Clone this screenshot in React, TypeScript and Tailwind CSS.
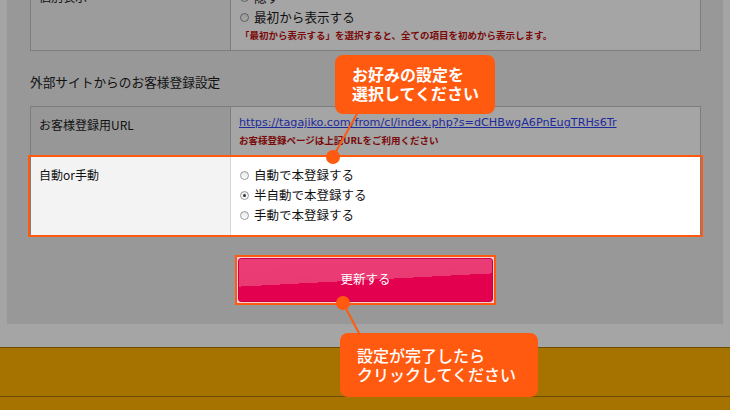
import React from "react";

const font = { fontFamily: '"Noto Sans CJK JP", "Noto Sans", sans-serif' };

function Radio({ checked, dim }: { checked?: boolean; dim?: boolean }) {
  return (
    <span
      className={
        "inline-flex items-center justify-center w-[9px] h-[9px] rounded-full border shrink-0 " +
        (dim
          ? "border-[#5e5e5e] bg-[linear-gradient(180deg,#9a9a9a,#a8a8a8)]"
          : "border-[#9a9a9a] bg-[linear-gradient(180deg,#e6e6e6,#ffffff)]")
      }
    >
      {checked && <span className="w-[3px] h-[3px] rounded-full bg-[#333]" />}
    </span>
  );
}

export default function App() {
  return (
    <div
      className="relative w-[730px] h-[410px] overflow-hidden bg-[#a5a5a5] flex flex-col"
      style={font}
    >
      {/* panel */}
      <div className="mx-[6px] h-[325px] shrink-0 bg-[#989898] border-x border-b border-[#a3a3a3] overflow-hidden pl-[23px] pr-[22px]">
        {/* top table (cut) */}
        <div className="-mt-[22px] flex border border-[#7d7d7d]">
          <div className="w-[200px] shrink-0 bg-[#9c9c9c] border-r border-[#7d7d7d] px-[8px] pt-[8px] text-[12px] leading-[20px] text-[#111]">
            個別表示
          </div>
          <div className="flex-1 bg-[#a5a5a5] px-[9px] pt-[8px] pb-[7px]">
            <div className="flex items-center gap-[5px] text-[12.6px] leading-[20px] text-[#111]">
              <Radio dim />
              <span>隠す</span>
            </div>
            <div className="flex items-center gap-[5px] text-[12.6px] leading-[20px] text-[#111]">
              <Radio dim />
              <span>最初から表示する</span>
            </div>
            <div className="text-[9.5px] font-bold leading-[16px] text-[#7a0a0a]">
              「最初から表示する」を選択すると、全ての項目を初めから表示します。
            </div>
          </div>
        </div>

        <div className="mt-[21px] mb-[14px] text-[12.7px] leading-[20px] text-[#111]">
          外部サイトからのお客様登録設定
        </div>

        {/* second table */}
        <div className="border border-[#7d7d7d] border-b-0">
          <div className="flex border-b border-[#7d7d7d]">
            <div className="w-[200px] shrink-0 bg-[#979797] border-r border-[#7d7d7d] px-[8px] pt-[8px] text-[12px] leading-[20px] text-[#111] h-[49px]">
              お客様登録用URL
            </div>
            <div className="flex-1 bg-[#a5a5a5] px-[8px] pt-[7px]">
              <div
                className="text-[11.2px] leading-[18px] text-[#1d2a9c] underline"
                style={{ fontFamily: '"DejaVu Sans", sans-serif' }}
              >
                https://tagajiko.com/from/cl/index.php?s=dCHBwgA6PnEugTRHs6Tr
              </div>
              <div className="text-[9.5px] font-bold leading-[16px] text-[#7a0a0a]">
                お客様登録ページは上記URLをご利用ください
              </div>
            </div>
          </div>
          <div className="relative flex">
            <div className="w-[200px] shrink-0 bg-[#f3f3f3] border-r border-[#d8d8d8] px-[8px] pt-[8px] text-[12px] leading-[20px] text-[#111] h-[78px]">
              自動or手動
            </div>
            <div className="flex-1 bg-white px-[9px] pt-[8px]">
              {["自動で本登録する", "半自動で本登録する", "手動で本登録する"].map((t, i) => (
                <div key={t} className="flex items-center gap-[5px] text-[12.5px] leading-[20px] text-[#111]">
                  <Radio checked={i === 1} />
                  <span>{t}</span>
                </div>
              ))}
            </div>
            <div className="absolute -inset-x-[3px] -top-[2px] -bottom-[2px] border-2 border-[#ff5a10] pointer-events-none" />
          </div>
        </div>

        {/* button */}
        <div className="mt-[20px] flex justify-center">
          <div className="w-[261px] h-[50px] border-2 border-[#ff5a10] bg-[#f4d0da] p-[1px]">
            <div className="w-full h-full rounded-[3px] border border-[#c8003f] bg-[linear-gradient(177deg,#ec3d77_0%,#ea3a73_50%,#e3004f_50%,#e3004f_100%)] flex items-center justify-center pb-[2px] text-[12.5px] text-white">
              更新する
            </div>
          </div>
        </div>
      </div>

      <div className="h-[22px] shrink-0" />

      {/* brown strip */}
      <div className="flex-1 bg-[#a67300] border-t border-[#6d4d00] flex flex-col">
        <div className="h-[48px] shrink-0" />
        <div className="border-t border-[#6d4d00]" />
      </div>

      {/* connectors */}
      <svg className="absolute inset-0 pointer-events-none" width="730" height="410">
        <line x1="358" y1="112" x2="333" y2="157" stroke="#ff5a10" strokeWidth="2" />
        <circle cx="333" cy="157" r="7" fill="#ff5a10" />
        <line x1="343" y1="303" x2="360" y2="335" stroke="#ff5a10" strokeWidth="2" />
        <circle cx="343" cy="303" r="7" fill="#ff5a10" />
      </svg>

      {/* callout 1 */}
      <div className="absolute left-[335px] top-[55px] w-[160px] h-[59px] rounded-[8px] bg-[#ff5a10] pl-[17px] pt-[10px] text-white font-bold text-[16px] leading-[19px]">
        <div>お好みの設定を</div>
        <div>選択してください</div>
      </div>

      {/* callout 2 */}
      <div className="absolute left-[340px] top-[333px] w-[198px] h-[64px] rounded-[8px] bg-[#ff5a10] pl-[17px] pt-[13px] text-white font-medium text-[16px] leading-[19px]">
        <div>設定が完了したら</div>
        <div>クリックしてください</div>
      </div>
    </div>
  );
}
